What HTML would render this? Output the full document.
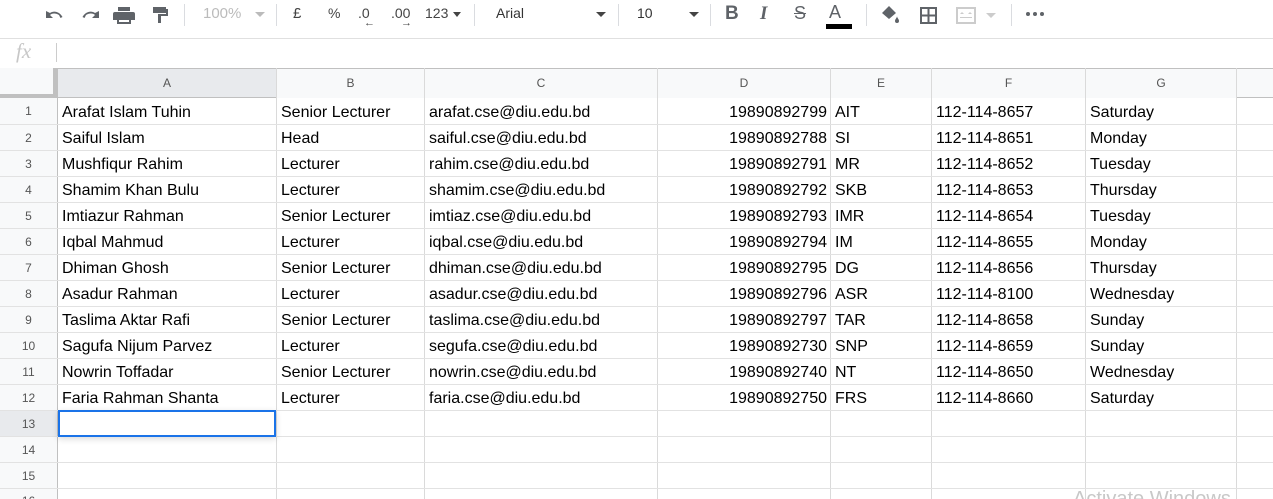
<!DOCTYPE html>
<html style="width:1273px;height:499px;overflow:hidden"><head><meta charset="utf-8"><style>
*{margin:0;padding:0;box-sizing:border-box}
body{width:1273px;height:499px;overflow:hidden;background:#fff;font-family:"Liberation Sans",Arial,sans-serif;position:relative}
.a{position:absolute}
.tb{color:#444;font-size:15px;top:5px}
.hd{background:#f8f9fa;color:#555;font-size:12px;text-align:center;line-height:29px}
.c{position:absolute;font-size:16px;color:#000;line-height:26px;white-space:nowrap}
.vl{position:absolute;width:1px;background:#dadada}
.hl{position:absolute;height:1px;background:#e2e2e2}
.rn{position:absolute;left:0;width:57px;text-align:center;font-size:12px;color:#555;line-height:26px;background:#f8f9fa}
.sep{position:absolute;top:4px;width:1px;height:22px;background:#dadce0}
</style></head><body>
<svg class="a" style="left:44px;top:4px" width="130" height="22" viewBox="0 0 130 22" fill="#5f6368">
<path d="M2 7v7h7l-3-3c2-2 6-2 9 0l1.5 3 2-1C16 8 10 6 6 9z"/>
<path d="M55 7v7h-7l3-3c-2-2-6-2-9 0l-1.5 3-2-1C41 8 47 6 51 9z"/>
<path d="M74 3h12v4H74zM71 8h18a2 2 0 0 1 2 2v6h-4v4H73v-4h-4v-6a2 2 0 0 1 2-2zm4 8v2h10v-2z"/>
<path d="M109 3h13v6h-13zM122 5h2v7h-7v7h-3v-9h8z"/>
</svg>
<div class="sep" style="left:184px"></div>
<div class="a tb" style="left:203px;color:#bbb">100%</div>
<div class="a" style="left:255px;top:12px;border:5px solid transparent;border-top-color:#bbb;border-bottom:0"></div>
<div class="sep" style="left:276px"></div>
<div class="a tb" style="left:293px">£</div>
<div class="a tb" style="left:328px;font-size:14px">%</div>
<div class="a tb" style="left:358px;font-size:14px">.0</div>
<div class="a" style="left:364px;top:17px;font-size:11px;color:#444">←</div>
<div class="a tb" style="left:391px;font-size:14px">.00</div>
<div class="a" style="left:401px;top:17px;font-size:11px;color:#444">→</div>
<div class="a tb" style="left:425px;font-size:14px">123</div>
<div class="a" style="left:453px;top:12px;border-style:solid;border-color:#444 transparent transparent;border-width:5px 4px 0"></div>
<div class="sep" style="left:474px"></div>
<div class="a tb" style="left:496px;font-size:14px;color:#333">Arial</div>
<div class="a" style="left:596px;top:12px;border:5px solid transparent;border-top-color:#444;border-bottom:0"></div>
<div class="sep" style="left:618px"></div>
<div class="a tb" style="left:637px;font-size:14px;color:#333">10</div>
<div class="a" style="left:689px;top:12px;border:5px solid transparent;border-top-color:#444;border-bottom:0"></div>
<div class="sep" style="left:710px"></div>
<div class="a" style="left:725px;top:3px;font-size:19px;font-weight:bold;color:#5f6368">B</div>
<div class="a" style="left:760px;top:3px;font-size:19px;font-style:italic;font-weight:bold;color:#5f6368;font-family:'Liberation Serif',serif">I</div>
<div class="a" style="left:794px;top:3px;font-size:18px;color:#5f6368;text-decoration:line-through">S</div>
<div class="a" style="left:829px;top:2px;font-size:18px;color:#5f6368">A</div>
<div class="a" style="left:826px;top:24px;width:26px;height:5px;background:#000"></div>
<div class="sep" style="left:866px"></div>
<svg class="a" style="left:880px;top:4px" width="130" height="22" viewBox="0 0 130 22" fill="#5f6368">
<path d="M2 9l7-7 7 7-7 6zM17 12c0 2 2 3 2 5a2 2 0 0 1-4 0c0-2 2-3 2-5z"/>
<path d="M40 3h17v17H40zm2 2v5.5h5.5V5zm7.5 0v5.5H55V5zM42 12.5V18h5.5v-5.5zm7.5 0V18H55v-5.5z"/>
<path fill="#ccc" d="M76 3h20v17H76zm2 2v13h16V5zM80 10h4l-2-2zM92 10h-4l2-2zM80 13h12v1H80z"/>
<path fill="#ccc" d="M106 9h10l-5 5z"/>
</svg>
<div class="sep" style="left:1011px"></div>
<svg class="a" style="left:1025px;top:11px" width="20" height="6" fill="#5f6368"><circle cx="3" cy="3" r="2"/><circle cx="10" cy="3" r="2"/><circle cx="17" cy="3" r="2"/></svg>
<div class="hl" style="left:0;top:38px;width:1273px;background:#e0e0e0"></div>
<div class="a" style="left:16px;top:39px;font-size:21px;font-style:italic;color:#c7c7c7;font-family:'Liberation Serif',serif">fx</div>
<div class="a" style="left:56px;top:43px;width:1px;height:19px;background:#ccc"></div>
<div class="a" style="left:0;top:68px;width:1273px;height:30px;background:#f8f9fa;border-top:1px solid #c0c0c0;border-bottom:1px solid #c0c0c0"></div>
<div class="a" style="left:0;top:68px;width:57px;height:30px;border-right:4px solid #c0c0c0;border-bottom:4px solid #c0c0c0;background:#f8f9fa"></div>
<div class="a hd" style="left:58px;top:69px;width:218px;height:28px;background:#e8eaed">A</div>
<div class="a hd" style="left:277px;top:69px;width:147px">B</div>
<div class="a hd" style="left:425px;top:69px;width:232px">C</div>
<div class="a hd" style="left:658px;top:69px;width:172px">D</div>
<div class="a hd" style="left:831px;top:69px;width:100px">E</div>
<div class="a hd" style="left:932px;top:69px;width:153px">F</div>
<div class="a hd" style="left:1086px;top:69px;width:150px">G</div>
<div class="a" style="left:0;top:98px;width:57px;height:401px;background:#f8f9fa"></div>
<div class="a" style="left:57px;top:68px;width:1px;height:431px;background:#c0c0c0"></div>
<div class="vl" style="left:276px;top:68px;height:431px"></div>
<div class="vl" style="left:424px;top:68px;height:431px"></div>
<div class="vl" style="left:657px;top:68px;height:431px"></div>
<div class="vl" style="left:830px;top:68px;height:431px"></div>
<div class="vl" style="left:931px;top:68px;height:431px"></div>
<div class="vl" style="left:1085px;top:68px;height:431px"></div>
<div class="vl" style="left:1236px;top:68px;height:431px"></div>
<div class="hl" style="left:0;top:124px;width:1273px"></div>
<div class="hl" style="left:0;top:150px;width:1273px"></div>
<div class="hl" style="left:0;top:176px;width:1273px"></div>
<div class="hl" style="left:0;top:202px;width:1273px"></div>
<div class="hl" style="left:0;top:228px;width:1273px"></div>
<div class="hl" style="left:0;top:254px;width:1273px"></div>
<div class="hl" style="left:0;top:280px;width:1273px"></div>
<div class="hl" style="left:0;top:306px;width:1273px"></div>
<div class="hl" style="left:0;top:332px;width:1273px"></div>
<div class="hl" style="left:0;top:358px;width:1273px"></div>
<div class="hl" style="left:0;top:384px;width:1273px"></div>
<div class="hl" style="left:0;top:410px;width:1273px"></div>
<div class="hl" style="left:0;top:436px;width:1273px"></div>
<div class="hl" style="left:0;top:462px;width:1273px"></div>
<div class="hl" style="left:0;top:488px;width:1273px"></div>
<div class="rn" style="top:98px;height:26px">1</div>
<div class="rn" style="top:125px;height:25px">2</div>
<div class="rn" style="top:151px;height:25px">3</div>
<div class="rn" style="top:177px;height:25px">4</div>
<div class="rn" style="top:203px;height:25px">5</div>
<div class="rn" style="top:229px;height:25px">6</div>
<div class="rn" style="top:255px;height:25px">7</div>
<div class="rn" style="top:281px;height:25px">8</div>
<div class="rn" style="top:307px;height:25px">9</div>
<div class="rn" style="top:333px;height:25px">10</div>
<div class="rn" style="top:359px;height:25px">11</div>
<div class="rn" style="top:385px;height:25px">12</div>
<div class="rn" style="top:411px;height:25px;background:#e8eaed">13</div>
<div class="rn" style="top:437px;height:25px">14</div>
<div class="rn" style="top:463px;height:25px">15</div>
<div class="rn" style="top:489px;height:10px;line-height:24px;overflow:hidden">16</div>
<div class="c" style="left:62px;top:100px">Arafat Islam Tuhin</div><div class="c" style="left:281px;top:100px">Senior Lecturer</div><div class="c" style="left:429px;top:100px">arafat.cse@diu.edu.bd</div><div class="c" style="right:446px;top:100px">19890892799</div><div class="c" style="left:835px;top:100px">AIT</div><div class="c" style="left:936px;top:100px">112-114-8657</div><div class="c" style="left:1090px;top:100px">Saturday</div>
<div class="c" style="left:62px;top:126px">Saiful Islam</div><div class="c" style="left:281px;top:126px">Head</div><div class="c" style="left:429px;top:126px">saiful.cse@diu.edu.bd</div><div class="c" style="right:446px;top:126px">19890892788</div><div class="c" style="left:835px;top:126px">SI</div><div class="c" style="left:936px;top:126px">112-114-8651</div><div class="c" style="left:1090px;top:126px">Monday</div>
<div class="c" style="left:62px;top:152px">Mushfiqur Rahim</div><div class="c" style="left:281px;top:152px">Lecturer</div><div class="c" style="left:429px;top:152px">rahim.cse@diu.edu.bd</div><div class="c" style="right:446px;top:152px">19890892791</div><div class="c" style="left:835px;top:152px">MR</div><div class="c" style="left:936px;top:152px">112-114-8652</div><div class="c" style="left:1090px;top:152px">Tuesday</div>
<div class="c" style="left:62px;top:178px">Shamim Khan Bulu</div><div class="c" style="left:281px;top:178px">Lecturer</div><div class="c" style="left:429px;top:178px">shamim.cse@diu.edu.bd</div><div class="c" style="right:446px;top:178px">19890892792</div><div class="c" style="left:835px;top:178px">SKB</div><div class="c" style="left:936px;top:178px">112-114-8653</div><div class="c" style="left:1090px;top:178px">Thursday</div>
<div class="c" style="left:62px;top:204px">Imtiazur Rahman</div><div class="c" style="left:281px;top:204px">Senior Lecturer</div><div class="c" style="left:429px;top:204px">imtiaz.cse@diu.edu.bd</div><div class="c" style="right:446px;top:204px">19890892793</div><div class="c" style="left:835px;top:204px">IMR</div><div class="c" style="left:936px;top:204px">112-114-8654</div><div class="c" style="left:1090px;top:204px">Tuesday</div>
<div class="c" style="left:62px;top:230px">Iqbal Mahmud</div><div class="c" style="left:281px;top:230px">Lecturer</div><div class="c" style="left:429px;top:230px">iqbal.cse@diu.edu.bd</div><div class="c" style="right:446px;top:230px">19890892794</div><div class="c" style="left:835px;top:230px">IM</div><div class="c" style="left:936px;top:230px">112-114-8655</div><div class="c" style="left:1090px;top:230px">Monday</div>
<div class="c" style="left:62px;top:256px">Dhiman Ghosh</div><div class="c" style="left:281px;top:256px">Senior Lecturer</div><div class="c" style="left:429px;top:256px">dhiman.cse@diu.edu.bd</div><div class="c" style="right:446px;top:256px">19890892795</div><div class="c" style="left:835px;top:256px">DG</div><div class="c" style="left:936px;top:256px">112-114-8656</div><div class="c" style="left:1090px;top:256px">Thursday</div>
<div class="c" style="left:62px;top:282px">Asadur Rahman</div><div class="c" style="left:281px;top:282px">Lecturer</div><div class="c" style="left:429px;top:282px">asadur.cse@diu.edu.bd</div><div class="c" style="right:446px;top:282px">19890892796</div><div class="c" style="left:835px;top:282px">ASR</div><div class="c" style="left:936px;top:282px">112-114-8100</div><div class="c" style="left:1090px;top:282px">Wednesday</div>
<div class="c" style="left:62px;top:308px">Taslima Aktar Rafi</div><div class="c" style="left:281px;top:308px">Senior Lecturer</div><div class="c" style="left:429px;top:308px">taslima.cse@diu.edu.bd</div><div class="c" style="right:446px;top:308px">19890892797</div><div class="c" style="left:835px;top:308px">TAR</div><div class="c" style="left:936px;top:308px">112-114-8658</div><div class="c" style="left:1090px;top:308px">Sunday</div>
<div class="c" style="left:62px;top:334px">Sagufa Nijum Parvez</div><div class="c" style="left:281px;top:334px">Lecturer</div><div class="c" style="left:429px;top:334px">segufa.cse@diu.edu.bd</div><div class="c" style="right:446px;top:334px">19890892730</div><div class="c" style="left:835px;top:334px">SNP</div><div class="c" style="left:936px;top:334px">112-114-8659</div><div class="c" style="left:1090px;top:334px">Sunday</div>
<div class="c" style="left:62px;top:360px">Nowrin Toffadar</div><div class="c" style="left:281px;top:360px">Senior Lecturer</div><div class="c" style="left:429px;top:360px">nowrin.cse@diu.edu.bd</div><div class="c" style="right:446px;top:360px">19890892740</div><div class="c" style="left:835px;top:360px">NT</div><div class="c" style="left:936px;top:360px">112-114-8650</div><div class="c" style="left:1090px;top:360px">Wednesday</div>
<div class="c" style="left:62px;top:386px">Faria Rahman Shanta</div><div class="c" style="left:281px;top:386px">Lecturer</div><div class="c" style="left:429px;top:386px">faria.cse@diu.edu.bd</div><div class="c" style="right:446px;top:386px">19890892750</div><div class="c" style="left:835px;top:386px">FRS</div><div class="c" style="left:936px;top:386px">112-114-8660</div><div class="c" style="left:1090px;top:386px">Saturday</div>
<div class="a" style="left:58px;top:410px;width:218px;height:27px;border:2px solid #1a73e8;box-shadow:0 2px 6px rgba(0,0,0,.15)"></div>
<div class="a" style="left:1073px;top:489px;font-size:20px;color:#c8c8c8;line-height:20px">Activate Windows</div>
</body></html>
